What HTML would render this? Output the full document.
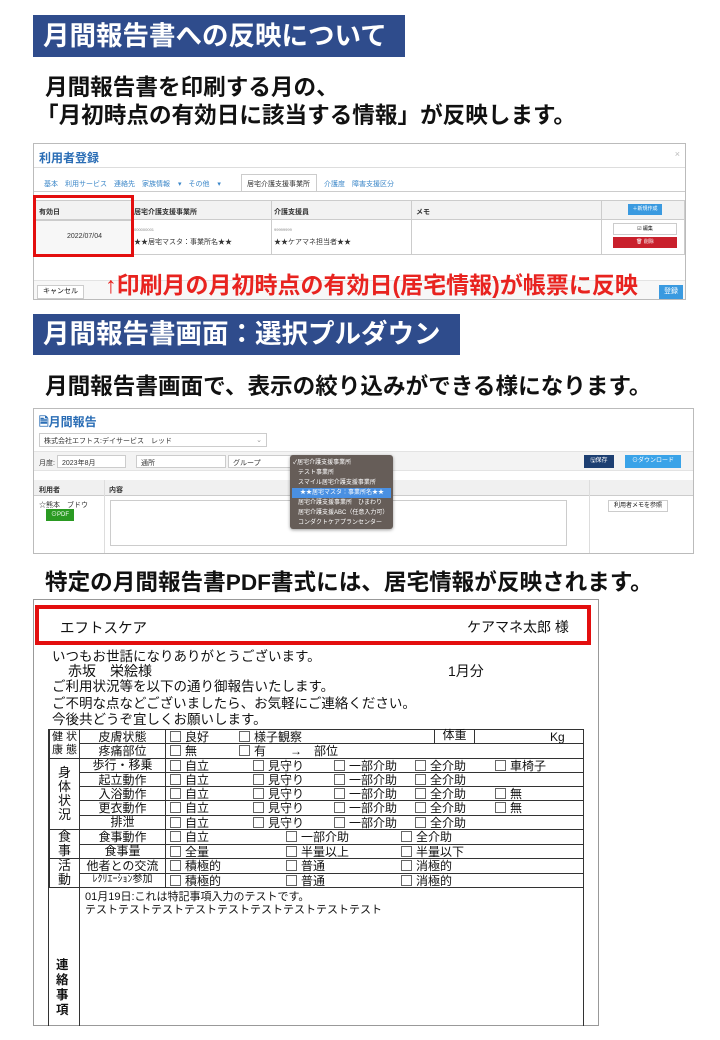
<!DOCTYPE html>
<html><head><meta charset="utf-8"><style>
*{margin:0;padding:0;box-sizing:border-box}
body{width:720px;height:1040px;background:#fff;position:relative;overflow:hidden;font-family:"Liberation Sans","Noto Sans CJK JP",sans-serif;color:#111}
.a{position:absolute;white-space:nowrap}
.hd{background:#2f4c8c;color:#fff;font-weight:bold;font-size:26.5px;line-height:42px;padding-left:10px}
.big{font-weight:bold;font-size:22.6px}
.shot{border:1px solid #bbb;background:#fff}
.s{font-size:7px;color:#333}
table{border-collapse:collapse}
.pt td{border:1px solid #333;font-size:12px;height:14.3px;line-height:12px;padding:0;white-space:nowrap}
.cb{display:inline-block;width:11px;height:11px;border:1px solid #666;vertical-align:-1px;margin-right:4px;background:#fff}
.o{position:absolute;top:1px}
</style></head><body>

<div class="a hd" style="left:33px;top:15px;width:372px;height:42px">月間報告書への反映について</div>
<div class="a big" style="left:45px;top:69px">月間報告書を印刷する月の、</div>
<div class="a big" style="left:36px;top:97px">「月初時点の有効日に該当する情報」が反映します。</div>

<!-- screenshot 1 -->
<div class="a shot" style="left:33px;top:143px;width:653px;height:157px">
 <div class="a" style="left:5px;top:5px;font-size:12px;font-weight:bold;color:#2a6db5">利用者登録</div>
 <div class="a" style="right:5px;top:5px;font-size:9px;color:#bbb">×</div>
 <div class="a" style="left:0;top:23px;width:651px;border-top:1px solid #ddd"></div>
 <div class="a s" style="left:10px;top:35px;color:#3a86c8;word-spacing:6px">基本　利用サービス　連絡先　家族情報 ▾　その他 ▾</div>
 <div class="a" style="left:207px;top:30px;width:76px;height:18px;border:1px solid #ccc;border-bottom:none;background:#fff"></div>
 <div class="a s" style="left:213px;top:35px">居宅介護支援事業所</div>
 <div class="a s" style="left:290px;top:35px;color:#3a86c8">介護度　障害支援区分</div>
 <div class="a" style="left:0;top:47px;width:651px;border-top:1px solid #ccc"></div>
 <div class="a" style="left:0;top:56px;width:651px;height:55px;border:1px solid #ccc"></div>
 <div class="a" style="left:0;top:56px;width:651px;height:20px;background:#f2f2f2;border:1px solid #ccc"></div>
 <div class="a" style="left:0;top:76px;width:98px;height:35px;background:#f7f7f7;border:1px solid #ccc"></div>
 <div class="a" style="left:98px;top:56px;height:55px;border-left:1px solid #ccc"></div>
 <div class="a" style="left:237px;top:56px;height:55px;border-left:1px solid #ccc"></div>
 <div class="a" style="left:377px;top:56px;height:55px;border-left:1px solid #ccc"></div>
 <div class="a" style="left:567px;top:56px;height:55px;border-left:1px solid #ccc"></div>
 <div class="a s" style="left:5px;top:63px;font-weight:bold">有効日</div>
 <div class="a s" style="left:100px;top:63px;font-weight:bold">居宅介護支援事業所</div>
 <div class="a s" style="left:240px;top:63px;font-weight:bold">介護支援員</div>
 <div class="a s" style="left:382px;top:63px;font-weight:bold">メモ</div>
 <div class="a" style="left:594px;top:60px;width:34px;height:11px;background:#3a9ae0;color:#fff;font-size:5px;text-align:center;line-height:11px">＋新規作成</div>
 <div class="a s" style="left:33px;top:89px">2022/07/04</div>
 <div class="a" style="left:100px;top:83px;font-size:4px;color:#888">000000001</div>
 <div class="a s" style="left:100px;top:93px">★★居宅マスタ：事業所名★★</div>
 <div class="a" style="left:240px;top:83px;font-size:4px;color:#888">99999999</div>
 <div class="a s" style="left:240px;top:93px">★★ケアマネ担当者★★</div>
 <div class="a" style="left:579px;top:79px;width:64px;height:12px;border:1px solid #ccc;font-size:5px;text-align:center;line-height:11px">☑ 編集</div>
 <div class="a" style="left:579px;top:93px;width:64px;height:11px;background:#c9202c;color:#fff;font-size:5px;text-align:center;line-height:11px">🗑 削除</div>
 <div class="a" style="left:0;top:136px;width:651px;height:19px;background:#f7f7f7;border-top:1px solid #e3e3e3"></div>
 <div class="a" style="left:3px;top:141px;width:47px;height:14px;border:1px solid #ccc;background:#fff;font-size:7px;text-align:center;line-height:12px">キャンセル</div>
 <div class="a" style="left:625px;top:141px;width:24px;height:14px;background:#3a9ae0;color:#fff;font-size:7px;text-align:center;line-height:14px">登録</div>
 <div class="a" style="left:71px;top:122px;color:#e8231f;font-weight:bold;font-size:23px">↑印刷月の月初時点の有効日(居宅情報)が帳票に反映</div>
</div>
<div class="a" style="left:33px;top:195px;width:101px;height:62px;border:3px solid #e30e0e"></div>

<div class="a hd" style="left:33px;top:314px;width:427px;height:41px;line-height:41px">月間報告書画面：選択プルダウン</div>
<div class="a big" style="left:45px;top:368px">月間報告書画面で、表示の絞り込みができる様になります。</div>

<!-- screenshot 2 -->
<div class="a shot" style="left:33px;top:408px;width:661px;height:146px">
 <div class="a" style="left:5px;top:4px;font-size:12px;font-weight:bold;color:#2a6db5">🗎月間報告</div>
 <div class="a s" style="left:5px;top:24px;width:228px;height:14px;border:1px solid #ccc;padding:2px 4px">株式会社エフトス:デイサービス　レッド<span style="float:right;color:#999">⌄</span></div>
 <div class="a" style="left:0;top:42px;width:659px;height:20px;background:#f3f3f3;border-top:1px solid #e3e3e3;border-bottom:1px solid #e3e3e3"></div>
 <div class="a s" style="left:5px;top:49px">月度:</div>
 <div class="a s" style="left:23px;top:46px;width:69px;height:13px;border:1px solid #ccc;background:#fff;padding:2px 4px">2023年8月</div>
 <div class="a s" style="left:102px;top:46px;width:90px;height:13px;border:1px solid #ccc;background:#fff;padding:2px 4px">通所</div>
 <div class="a s" style="left:194px;top:46px;width:65px;height:13px;border:1px solid #ccc;background:#fff;padding:2px 4px">グループ</div>
 <div class="a" style="left:550px;top:46px;width:30px;height:13px;background:#1d3f72;color:#fff;font-size:6px;text-align:center;line-height:13px">🖫保存</div>
 <div class="a" style="left:591px;top:46px;width:56px;height:13px;background:#3aa3e8;color:#fff;font-size:6px;text-align:center;line-height:13px">⊙ダウンロード</div>
 <div class="a" style="left:0;top:71px;width:659px;height:73px;border-top:1px solid #ccc"></div>
 <div class="a" style="left:0;top:71px;width:659px;height:16px;background:#f0f0f0;border-bottom:1px solid #ccc"></div>
 <div class="a" style="left:70px;top:71px;height:73px;border-left:1px solid #ddd"></div>
 <div class="a" style="left:555px;top:71px;height:73px;border-left:1px solid #ddd"></div>
 <div class="a s" style="left:5px;top:76px;font-weight:bold">利用者</div>
 <div class="a s" style="left:75px;top:76px;font-weight:bold">内容</div>
 <div class="a s" style="left:5px;top:91px">☆熊本　ブドウ</div>
 <div class="a" style="left:12px;top:100px;width:28px;height:12px;background:#2a9a22;color:#fff;font-size:6px;text-align:center;line-height:12px">⊙PDF</div>
 <div class="a" style="left:76px;top:91px;width:457px;height:46px;border:1px solid #ccc"></div>
 <div class="a" style="left:574px;top:91px;width:60px;height:12px;border:1px solid #ccc;font-size:6px;text-align:center;line-height:11px">利用者メモを参照</div>
 <div class="a" style="left:256px;top:46px;width:103px;height:74px;background:#665d58;border-radius:3px;box-shadow:0 1px 3px #0006;font-size:6px;color:#fff;padding-top:3px">
  <div style="height:10px;line-height:10px;padding-left:3px">✓居宅介護支援事業所</div>
  <div style="height:10px;line-height:10px;padding-left:8px">テスト事業所</div>
  <div style="height:10px;line-height:10px;padding-left:8px">スマイル居宅介護支援事業所</div>
  <div style="height:10px;line-height:10px;padding-left:8px;background:#4a90e2;margin:0 2px">★★居宅マスタ：事業所名★★</div>
  <div style="height:10px;line-height:10px;padding-left:8px">居宅介護支援事業所　ひまわり</div>
  <div style="height:10px;line-height:10px;padding-left:8px">居宅介護支援ABC（任意入力可）</div>
  <div style="height:10px;line-height:10px;padding-left:8px">コンダクトケアプランセンター</div>
 </div>
</div>

<div class="a big" style="left:45px;top:564px">特定の月間報告書PDF書式には、居宅情報が反映されます。</div>

<!-- PDF -->
<div class="a" style="left:33px;top:599px;width:566px;height:427px;border:1px solid #999"></div>
<div class="a" style="left:35px;top:605px;width:556px;height:40px;border:4px solid #e30e0e"></div>
<div class="a" style="left:60px;top:617px;font-size:14.5px">エフトスケア</div>
<div class="a" style="left:467px;top:617px;font-size:14px">ケアマネ太郎 様</div>
<div class="a" style="left:52px;top:645px;font-size:13.5px">いつもお世話になりありがとうございます。</div>
<div class="a" style="left:68px;top:661px;font-size:14px">赤坂　栄絵様</div>
<div class="a" style="left:448px;top:661px;font-size:14px">1月分</div>
<div class="a" style="left:52px;top:679px;font-size:13.5px;line-height:16.5px">ご利用状況等を以下の通り御報告いたします。<br>ご不明な点などございましたら、お気軽にご連絡ください。<br>今後共どうぞ宜しくお願いします。</div>
<div class="a" style="left:48px;top:729px;width:536px;height:297px;border:1px solid #333;border-top:none;border-bottom:none"></div>
<table class="a pt" style="left:49px;top:729px;width:535px">
<colgroup><col style="width:30px"><col style="width:86px"><col></colgroup>
<tr><td rowspan="2" style="font-size:11px;text-align:center;line-height:13px">健 状<br>康 態</td><td style="text-align:center">皮膚状態</td><td style="position:relative"><span class="o" style="left:4px"><i class="cb"></i>良好</span><span class="o" style="left:73px"><i class="cb"></i>様子観察</span><span class="o" style="left:268px;width:41px;height:14px;top:-1px;border-left:1px solid #333;border-right:1px solid #333;text-align:center">体重</span><span class="o" style="left:384px">Kg</span></td></tr>
<tr><td style="text-align:center">疼痛部位</td><td style="position:relative"><span class="o" style="left:4px"><i class="cb"></i>無</span><span class="o" style="left:73px"><i class="cb"></i>有　　→　部位</span></td></tr>
<tr><td rowspan="5" style="text-align:center;line-height:14px;font-size:13px">身<br>体<br>状<br>況</td><td style="text-align:center">歩行・移乗</td><td style="position:relative"><span class="o" style="left:4px"><i class="cb"></i>自立</span><span class="o" style="left:87px"><i class="cb"></i>見守り</span><span class="o" style="left:168px"><i class="cb"></i>一部介助</span><span class="o" style="left:249px"><i class="cb"></i>全介助</span><span class="o" style="left:329px"><i class="cb"></i>車椅子</span></td></tr>
<tr><td style="text-align:center">起立動作</td><td style="position:relative"><span class="o" style="left:4px"><i class="cb"></i>自立</span><span class="o" style="left:87px"><i class="cb"></i>見守り</span><span class="o" style="left:168px"><i class="cb"></i>一部介助</span><span class="o" style="left:249px"><i class="cb"></i>全介助</span></td></tr>
<tr><td style="text-align:center">入浴動作</td><td style="position:relative"><span class="o" style="left:4px"><i class="cb"></i>自立</span><span class="o" style="left:87px"><i class="cb"></i>見守り</span><span class="o" style="left:168px"><i class="cb"></i>一部介助</span><span class="o" style="left:249px"><i class="cb"></i>全介助</span><span class="o" style="left:329px"><i class="cb"></i>無</span></td></tr>
<tr><td style="text-align:center">更衣動作</td><td style="position:relative"><span class="o" style="left:4px"><i class="cb"></i>自立</span><span class="o" style="left:87px"><i class="cb"></i>見守り</span><span class="o" style="left:168px"><i class="cb"></i>一部介助</span><span class="o" style="left:249px"><i class="cb"></i>全介助</span><span class="o" style="left:329px"><i class="cb"></i>無</span></td></tr>
<tr><td style="text-align:center">排泄</td><td style="position:relative"><span class="o" style="left:4px"><i class="cb"></i>自立</span><span class="o" style="left:87px"><i class="cb"></i>見守り</span><span class="o" style="left:168px"><i class="cb"></i>一部介助</span><span class="o" style="left:249px"><i class="cb"></i>全介助</span></td></tr>
<tr><td rowspan="2" style="text-align:center;line-height:14px;font-size:13px">食<br>事</td><td style="text-align:center">食事動作</td><td style="position:relative"><span class="o" style="left:4px"><i class="cb"></i>自立</span><span class="o" style="left:120px"><i class="cb"></i>一部介助</span><span class="o" style="left:235px"><i class="cb"></i>全介助</span></td></tr>
<tr><td style="text-align:center">食事量</td><td style="position:relative"><span class="o" style="left:4px"><i class="cb"></i>全量</span><span class="o" style="left:120px"><i class="cb"></i>半量以上</span><span class="o" style="left:235px"><i class="cb"></i>半量以下</span></td></tr>
<tr><td rowspan="2" style="text-align:center;line-height:14px;font-size:13px">活<br>動</td><td style="text-align:center">他者との交流</td><td style="position:relative"><span class="o" style="left:4px"><i class="cb"></i>積極的</span><span class="o" style="left:120px"><i class="cb"></i>普通</span><span class="o" style="left:235px"><i class="cb"></i>消極的</span></td></tr>
<tr><td style="text-align:center;font-size:10px">ﾚｸﾘｴｰｼｮﾝ参加</td><td style="position:relative"><span class="o" style="left:4px"><i class="cb"></i>積極的</span><span class="o" style="left:120px"><i class="cb"></i>普通</span><span class="o" style="left:235px"><i class="cb"></i>消極的</span></td></tr>
</table>
<div class="a" style="left:79px;top:887px;height:139px;border-left:1px solid #333"></div>
<div class="a" style="left:85px;top:891px;font-size:11px;line-height:13px">01月19日:これは特記事項入力のテストです。<br>テストテストテストテストテストテストテストテストテスト</div>
<div class="a" style="left:56px;top:958px;font-size:12.5px;line-height:15px;width:14px;white-space:normal;font-weight:bold">連絡事項</div>

</body></html>
